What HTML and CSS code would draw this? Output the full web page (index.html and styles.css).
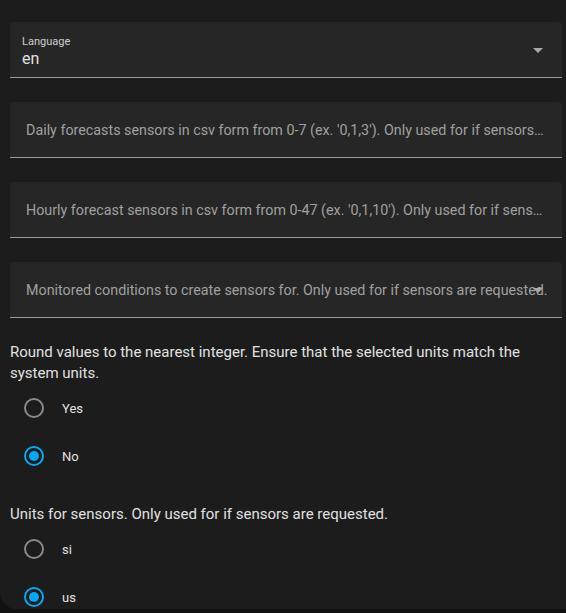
FILE: index.html
```html
<!DOCTYPE html>
<html>
<head>
<meta charset="utf-8">
<link rel="stylesheet" href="styles.css">
</head>
<body>
<div class="dialog">
  <div class="form">
    <div class="field select">
      <div class="select-text">
        <span class="float-label">Language</span>
        <span class="value">en</span>
      </div>
      <span class="arrow"></span>
    </div>

    <div class="field">
      <span class="placeholder">Daily forecasts sensors in csv form from 0-7 (ex. '0,1,3'). Only used for if sensors are requested.</span>
    </div>

    <div class="field">
      <span class="placeholder">Hourly forecast sensors in csv form from 0-47 (ex. '0,1,10'). Only used for if sensors are requested.</span>
    </div>

    <div class="field select">
      <span class="placeholder">Monitored conditions to create sensors for. Only used for if sensors are requested.</span>
      <span class="arrow"></span>
    </div>

    <div class="group">
      <p class="group-label">Round values to the nearest integer. Ensure that the selected units match the system units.</p>
      <div class="radio-row"><span class="radio"></span><span class="radio-label">Yes</span></div>
      <div class="radio-row"><span class="radio checked"></span><span class="radio-label">No</span></div>
    </div>

    <div class="group">
      <p class="group-label">Units for sensors. Only used for if sensors are requested.</p>
      <div class="radio-row"><span class="radio"></span><span class="radio-label">si</span></div>
      <div class="radio-row"><span class="radio checked"></span><span class="radio-label">us</span></div>
    </div>
  </div>
</div>
</body>
</html>
```

FILE: styles.css
```css
html, body {
  margin: 0;
  padding: 0;
  background: #111111;
  height: 613px;
  overflow: hidden;
}
body {
  font-family: Roboto, "Liberation Sans", sans-serif;
  color: #e1e1e1;
}
.dialog {
  background: #1c1c1c;
  width: 566px;
  height: 609px;
  border-radius: 0 0 0 16px;
  overflow: hidden;
}
.form {
  padding: 22px 4px 0 10px;
  display: flex;
  flex-direction: column;
  gap: 24px;
}
.field {
  position: relative;
  height: 55px;
  background: #262626;
  border-radius: 4px 4px 0 0;
  border-bottom: 1px solid #9a9a9a;
  display: flex;
  align-items: center;
  padding: 0 15px 0 16px;
}
.select {
  padding-left: 12px;
}
.select .placeholder {
  padding-left: 4px;
  overflow: visible;
}
.select-text {
  display: flex;
  flex-direction: column;
  padding-top: 3px;
}
.float-label {
  font-size: 11px;
  line-height: 14px;
  color: #cfcfcf;
}
.value {
  font-size: 16px;
  line-height: 19px;
  color: #e1e1e1;
}
.placeholder {
  font-size: 14.3px;
  color: #a0a0a0;
  white-space: nowrap;
  overflow: hidden;
  text-overflow: ellipsis;
  min-width: 0;
}
.arrow {
  position: absolute;
  right: 19px;
  top: 26px;
  width: 0;
  height: 0;
  border-left: 5px solid transparent;
  border-right: 5px solid transparent;
  border-top: 5px solid #a8a8a8;
}
.group {
  display: flex;
  flex-direction: column;
}
.group-label {
  margin: 0;
  font-size: 15px;
  line-height: 21px;
  color: #e1e1e1;
  padding-right: 30px;
}
.radio-row {
  display: flex;
  align-items: center;
  height: 48px;
}
.radio {
  box-sizing: border-box;
  width: 20px;
  height: 20px;
  margin-left: 14px;
  border: 2px solid #8a8a8a;
  border-radius: 50%;
  display: flex;
  align-items: center;
  justify-content: center;
}
.radio.checked {
  border-color: #03a9f4;
}
.radio.checked::after {
  content: "";
  width: 10px;
  height: 10px;
  border-radius: 50%;
  background: #03a9f4;
}
.radio-label {
  margin-left: 18px;
  font-size: 13px;
  color: #e1e1e1;
}
```
